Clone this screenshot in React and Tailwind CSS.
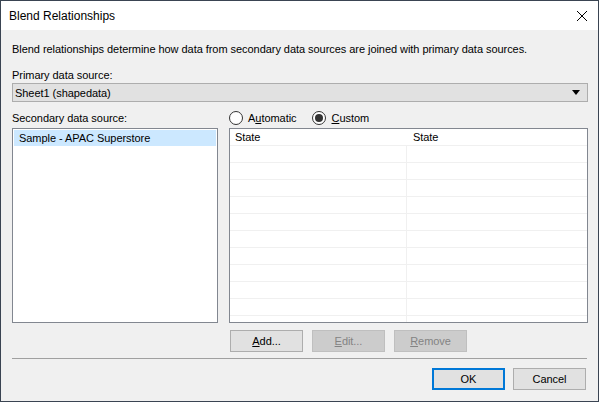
import React from 'react'

const rows = Array.from({ length: 11 })

function Radio({ checked, children }) {
  return (
    <label className="flex items-center gap-[5px]">
      <span className="w-[14px] h-[14px] rounded-full border border-[#333333] bg-white flex items-center justify-center">
        {checked && <span className="w-[8px] h-[8px] rounded-full bg-[#333333]" />}
      </span>
      <span>{children}</span>
    </label>
  )
}

function Button({ children, disabled, primary }) {
  let cls = 'w-[73px] h-[22px] flex items-center justify-center border '
  if (disabled) cls += 'bg-[#cccccc] border-[#bfbfbf] text-[#838383]'
  else if (primary) cls += 'bg-[#e1e1e1] border-2 border-[#0078d7] text-black'
  else cls += 'bg-[#e1e1e1] border-[#adadad] text-black'
  return <div className={cls}>{children}</div>
}

export default function App() {
  return (
    <div className="w-[599px] h-[402px] bg-[#f0f0f0] border border-[#3a4452] flex flex-col text-[11px] tracking-[-0.05px] leading-[16px] text-black whitespace-nowrap overflow-hidden font-['Liberation_Sans',Arial,sans-serif]">
      {/* Title bar */}
      <div className="h-[29px] bg-white flex items-center pl-[8px] pr-[9px] shrink-0 text-[12px] tracking-normal">
        <span className="flex-1">Blend Relationships</span>
        <svg width="12" height="12" viewBox="0 0 12 12" className="mr-[1px]">
          <path d="M1 1 L11 11 M11 1 L1 11" stroke="#000" strokeWidth="1" />
        </svg>
      </div>

      <div className="flex-1 flex flex-col pl-[11px] pr-[10px]">
        <div className="mt-[11px]">Blend relationships determine how data from secondary data sources are joined with primary data sources.</div>

        <div className="mt-[10px]">Primary data source:</div>
        <div className="h-[19px] bg-[#e1e1e1] border border-[#adadad] flex items-center pl-[2px] pr-[7px]">
          <span className="flex-1">Sheet1 (shapedata)</span>
          <svg width="8" height="5" viewBox="0 0 8 5">
            <path d="M0 0 L8 0 L4 5 Z" fill="#000" />
          </svg>
        </div>

        <div className="mt-[8px] flex gap-[11px] items-start">
          <div className="w-[206px] flex flex-col">
            <div>Secondary data source:</div>
            <div className="mt-[2px] h-[195px] bg-white border border-[#828790] p-[1px]">
              <div className="h-[16px] bg-[#cce8ff] pl-[5px] flex items-center">Sample - APAC Superstore</div>
            </div>
          </div>

          <div className="flex-1 flex flex-col">
            <div className="h-[16px] flex items-center gap-[16px]">
              <Radio>A<u>u</u>tomatic</Radio>
              <Radio checked><u>C</u>ustom</Radio>
            </div>
            <div className="mt-[2px] h-[195px] bg-white border border-[#828790] overflow-hidden">
              <div className="h-[17px] flex border-b border-[#f0f0f0]">
                <div className="w-[177px] pl-[5px] flex items-center">State</div>
                <div className="flex-1 pl-[6px] flex items-center">State</div>
              </div>
              {rows.map((_, i) => (
                <div key={i} className="h-[17px] flex border-b border-[#f0f0f0]">
                  <div className="w-[177px] border-r border-[#f0f0f0]" />
                  <div className="flex-1" />
                </div>
              ))}
            </div>
            <div className="mt-[7px] flex gap-[9px] pl-[1px]">
              <Button><u>A</u>dd...</Button>
              <Button disabled><u>E</u>dit...</Button>
              <Button disabled><u>R</u>emove</Button>
            </div>
          </div>
        </div>

        <div className="mt-[6px] h-[1px] bg-[#a0a0a0] mr-[1px]" />

        <div className="mt-[9px] flex justify-end gap-[8px] mr-[2px]">
          <Button primary>OK</Button>
          <Button>Cancel</Button>
        </div>
      </div>
    </div>
  )
}
